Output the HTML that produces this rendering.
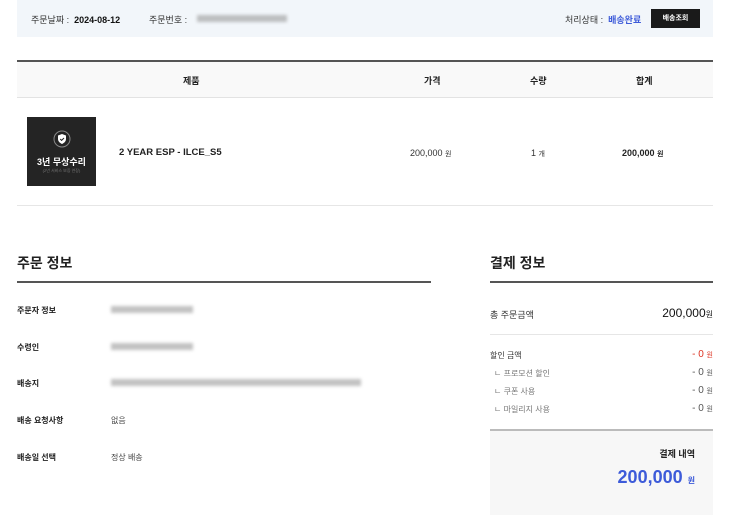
<!DOCTYPE html>
<html><head><meta charset="utf-8"><style>
*{margin:0;padding:0;box-sizing:border-box}
body{width:743px;height:532px;background:#fff;font-family:"Liberation Sans","Noto Sans CJK KR",sans-serif;color:#222;position:relative;overflow:hidden;font-size:9px}
.a{position:absolute;white-space:nowrap}
.b{font-weight:bold}
.blur{position:absolute;background:#999;filter:blur(1.5px);opacity:.6;height:7px}
</style></head><body>
<div class="a" style="left:17px;top:0;width:696px;height:37px;background:#f2f6fa"></div>
<div class="a" style="left:31px;top:13px;font-size:9px;color:#333">주문날짜 :&nbsp; <span class="b" style="color:#111">2024-08-12</span></div>
<div class="a" style="left:149px;top:13px;font-size:9px;color:#333">주문번호 :</div>
<div class="blur" style="left:197px;top:15px;width:90px"></div>
<div class="a" style="left:565px;top:13px;font-size:9px;color:#333">처리상태 :&nbsp; <span class="b" style="color:#3d5bd9">배송완료</span></div>
<div class="a" style="left:651px;top:9px;width:49px;height:19px;background:#1a1a1a;color:#fff;font-size:7px;font-weight:bold;text-align:center;line-height:19px">배송조회</div>

<div class="a" style="left:17px;top:60px;width:696px;height:2px;background:#555"></div>
<div class="a" style="left:17px;top:62px;width:696px;height:36px;background:#f9f9f9;border-bottom:1px solid #e3e3e3"></div>
<div class="a b" style="left:183px;top:74px">제품</div>
<div class="a b" style="left:424px;top:74px">가격</div>
<div class="a b" style="left:530px;top:74px">수량</div>
<div class="a b" style="left:636px;top:74px">합계</div>

<div class="a" style="left:27px;top:117px;width:69px;height:69px;background:#242424"></div>
<svg class="a" style="left:53px;top:130px" width="18" height="18" viewBox="0 0 18 18"><circle cx="9" cy="9" r="8" fill="none" stroke="#888" stroke-width="1"/><path d="M9 4 L13 5.5 V9 C13 11.5 11 13 9 14 C7 13 5 11.5 5 9 V5.5 Z" fill="#fff"/><path d="M7.2 9 L8.6 10.4 L11 8" fill="none" stroke="#242424" stroke-width="1"/></svg>
<div class="a b" style="left:27px;top:155px;width:69px;text-align:center;color:#fff;font-size:9px">3년 무상수리</div>
<div class="a" style="left:27px;top:168px;width:69px;text-align:center;color:#777;font-size:4px">(2년 서비스 보증 연장)</div>
<div class="a b" style="left:119px;top:147px;font-size:9.5px">2 YEAR ESP - ILCE_S5</div>
<div class="a" style="left:410px;top:148px;color:#333">200,000 <span style="font-size:7px">원</span></div>
<div class="a" style="left:531px;top:148px;color:#333">1 <span style="font-size:7px">개</span></div>
<div class="a b" style="left:622px;top:148px">200,000 <span style="font-size:7px">원</span></div>
<div class="a" style="left:17px;top:205px;width:696px;height:1px;background:#e6e6e6"></div>

<div class="a b" style="left:17px;top:253px;font-size:14px">주문 정보</div>
<div class="a" style="left:17px;top:281px;width:414px;height:2px;background:#555"></div>
<div class="a b" style="left:17px;top:305px;font-size:8px">주문자 정보</div>
<div class="blur" style="left:111px;top:306px;width:82px"></div>
<div class="a b" style="left:17px;top:342px;font-size:8px">수령인</div>
<div class="blur" style="left:111px;top:343px;width:82px"></div>
<div class="a b" style="left:17px;top:378px;font-size:8px">배송지</div>
<div class="blur" style="left:111px;top:379px;width:250px"></div>
<div class="a b" style="left:17px;top:415px;font-size:8px">배송 요청사항</div>
<div class="a" style="left:111px;top:415px;font-size:8px;color:#444">없음</div>
<div class="a b" style="left:17px;top:452px;font-size:8px">배송일 선택</div>
<div class="a" style="left:111px;top:452px;font-size:8px;color:#444">정상 배송</div>

<div class="a b" style="left:490px;top:253px;font-size:14px">결제 정보</div>
<div class="a" style="left:490px;top:281px;width:223px;height:2px;background:#555"></div>
<div class="a" style="left:490px;top:308px;font-size:9px;color:#333">총 주문금액</div>
<div class="a" style="right:30px;top:306px;font-size:12px;color:#111">200,000<span style="font-size:8px">원</span></div>
<div class="a" style="left:490px;top:334px;width:223px;height:1px;background:#e6e6e6"></div>
<div class="a" style="left:490px;top:350px;font-size:8px;color:#333">할인 금액</div>
<div class="a" style="right:30px;top:349px;font-size:10px;color:#d32">- 0 <span style="font-size:7px">원</span></div>
<div class="a" style="left:494px;top:368px;font-size:8px;color:#777">ㄴ 프로모션 할인</div>
<div class="a" style="right:30px;top:367px;font-size:10px;color:#555">- 0 <span style="font-size:7px">원</span></div>
<div class="a" style="left:494px;top:386px;font-size:8px;color:#777">ㄴ 쿠폰 사용</div>
<div class="a" style="right:30px;top:385px;font-size:10px;color:#555">- 0 <span style="font-size:7px">원</span></div>
<div class="a" style="left:494px;top:404px;font-size:8px;color:#777">ㄴ 마일리지 사용</div>
<div class="a" style="right:30px;top:403px;font-size:10px;color:#555">- 0 <span style="font-size:7px">원</span></div>
<div class="a" style="left:490px;top:429px;width:223px;height:2px;background:#bbb"></div>
<div class="a" style="left:490px;top:431px;width:223px;height:84px;background:#f7f7f7"></div>
<div class="a b" style="right:48px;top:447px;font-size:9px">결제 내역</div>
<div class="a b" style="right:48px;top:467px;font-size:18px;color:#3d5bd9">200,000 <span style="font-size:8px">원</span></div>
</body></html>
